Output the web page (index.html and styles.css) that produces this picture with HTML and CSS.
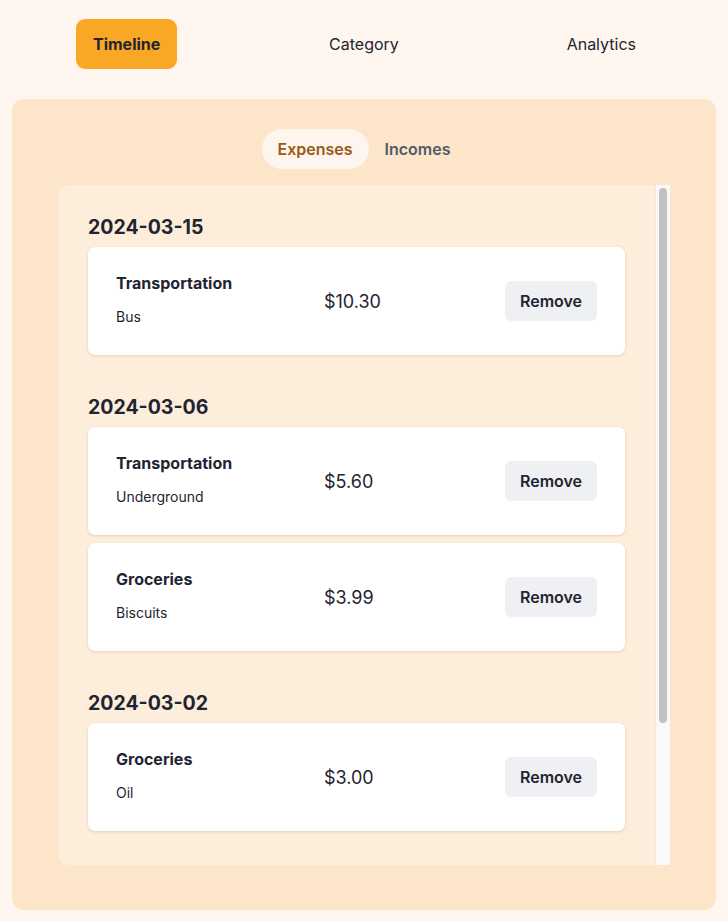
FILE: index.html
```html
<!DOCTYPE html>
<html lang="en">
<head>
<meta charset="utf-8">
<title>Expenses Timeline</title>
<link rel="stylesheet" href="styles.css">
</head>
<body>
  <nav class="nav">
    <div class="nav-cell"><button class="nav-btn active">Timeline</button></div>
    <div class="nav-cell"><button class="nav-btn">Category</button></div>
    <div class="nav-cell"><button class="nav-btn">Analytics</button></div>
  </nav>
  <main class="panel">
    <div class="tabs">
      <button class="tab active">Expenses</button>
      <button class="tab">Incomes</button>
    </div>
    <section class="list">
      <div class="list-content">
        <div class="group">
          <h2 class="date">2024-03-15</h2>
          <div class="card">
            <div class="info"><div class="cat">Transportation</div><div class="desc">Bus</div></div>
            <div class="amount">$10.30</div>
            <button class="remove">Remove</button>
          </div>
        </div>
        <div class="group">
          <h2 class="date">2024-03-06</h2>
          <div class="card">
            <div class="info"><div class="cat">Transportation</div><div class="desc">Underground</div></div>
            <div class="amount">$5.60</div>
            <button class="remove">Remove</button>
          </div>
          <div class="card">
            <div class="info"><div class="cat">Groceries</div><div class="desc">Biscuits</div></div>
            <div class="amount">$3.99</div>
            <button class="remove">Remove</button>
          </div>
        </div>
        <div class="group">
          <h2 class="date">2024-03-02</h2>
          <div class="card">
            <div class="info"><div class="cat">Groceries</div><div class="desc">Oil</div></div>
            <div class="amount">$3.00</div>
            <button class="remove">Remove</button>
          </div>
        </div>
      </div>
      <div class="scrollbar"><div class="thumb"></div></div>
    </section>
  </main>
</body>
</html>
```
FILE: styles.css
```css
* { box-sizing: border-box; }
html, body { margin: 0; }
body {
  margin: 8px;
  background: #fef6ef;
  font-family: Inter, "Noto Sans", sans-serif;
  color: #1f2430;
}
button { font-family: inherit; border: none; cursor: pointer; }

.nav {
  display: grid;
  grid-template-columns: 1fr 1fr 1fr;
  padding-top: 11px;
  margin-bottom: 30px;
}
.nav-cell { display: flex; justify-content: center; }
.nav-btn {
  height: 50px;
  padding: 0 17px;
  border-radius: 9px;
  background: transparent;
  font-size: 16px;
  font-weight: 400;
  color: #1f2430;
}
.nav-btn.active { background: #f9a825; font-weight: 700; }

.panel {
  margin: 0 4px;
  background: #fde5c9;
  border-radius: 12px;
  padding: 30px 0 45px;
}
.tabs { display: flex; justify-content: center; margin-bottom: 16px; }
.tab {
  height: 40px;
  padding: 0 16px;
  border-radius: 20px;
  background: transparent;
  font-size: 16px;
  font-weight: 600;
  color: #525a6b;
}
.tab.active { background: #fef5ee; color: #9a5a17; }

.list {
  display: flex;
  width: 612px;
  height: 680px;
  margin: 0 auto;
  background: #fdeddb;
  border-radius: 10px 0 0 10px;
  overflow: hidden;
}
.list-content {
  flex: 1;
  padding: 30px;
  overflow: hidden;
}
.scrollbar {
  width: 15px;
  flex: none;
  background: #f9f9f9;
  border-left: 1px solid #efe9e2;
  padding: 3px 3px 0 3px;
}
.thumb {
  height: 535px;
  background: #c1c1c1;
  border-radius: 5px;
}
.group { margin-bottom: 40px; }
.group:last-child { margin-bottom: 0; }
.date {
  margin: 0 0 8px;
  font-size: 19.5px;
  line-height: 24px;
  font-weight: 700;
  color: #1f2430;
}
.card {
  display: grid;
  grid-template-columns: 208px 1fr auto;
  align-items: center;
  height: 108px;
  padding: 24px 28px 28px;
  background: #fff;
  border-radius: 7px;
  box-shadow: 0 1px 3px rgba(120, 80, 40, 0.18);
  margin-bottom: 8px;
}
.card:last-child { margin-bottom: 0; }
.info { align-self: start; }
.cat { font-size: 16px; line-height: 24px; font-weight: 700; }
.desc { margin-top: 12px; font-size: 14px; line-height: 20px; }
.amount { font-size: 18px; margin-top: 4px; }
.remove {
  width: 92px;
  height: 40px;
  margin-top: 4px;
  border-radius: 6px;
  background: #eef0f4;
  font-size: 16px;
  font-weight: 600;
  color: #1f2430;
}
```
